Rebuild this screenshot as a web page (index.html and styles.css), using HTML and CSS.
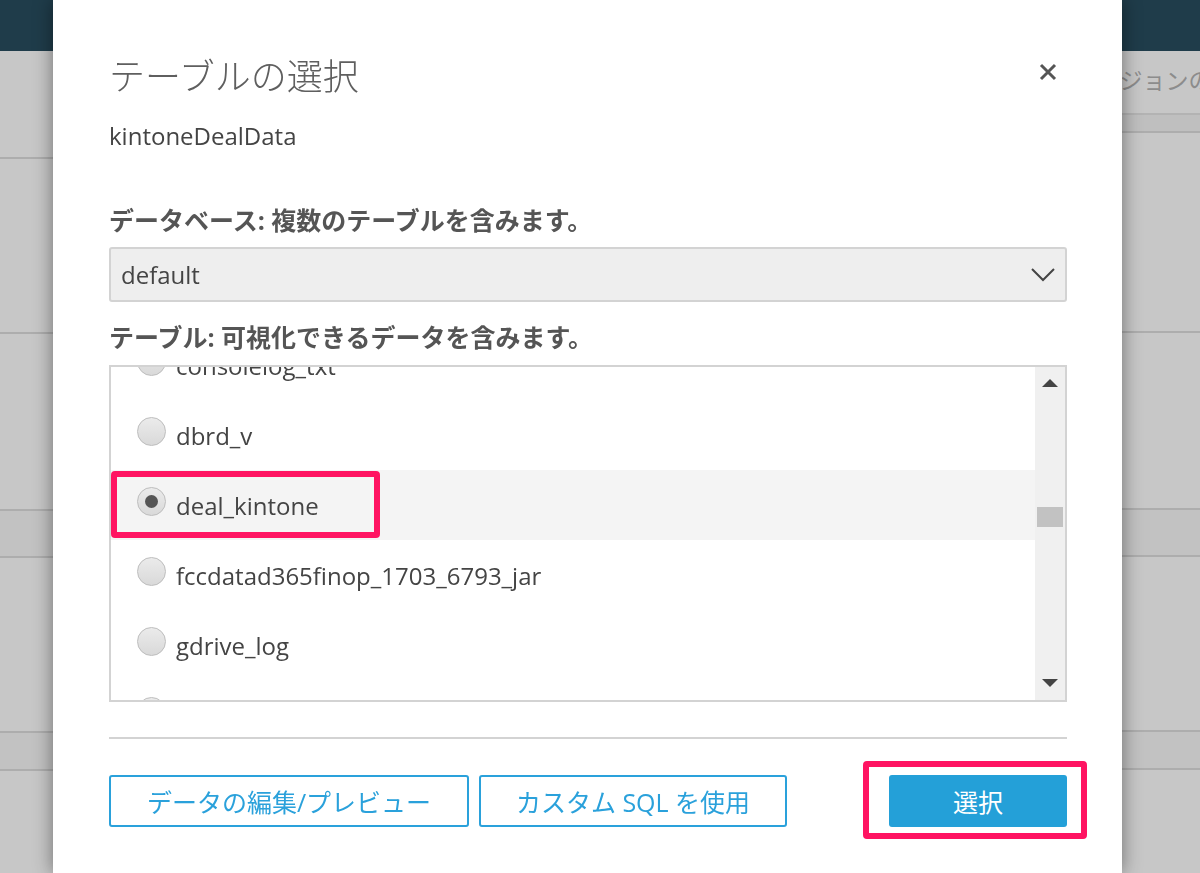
FILE: index.html
```html
<!DOCTYPE html>
<html lang="ja">
<head>
    <meta charset="utf-8">
    <link rel="stylesheet" href="styles.css">
</head>
<body>
<div id="pagediv">
    <div id="topbar"></div>
    <div id="pagebody">
        <div class="side side-left">
            <div class="bgrow bgrow-a"></div>
            <div class="bgrow bgrow-b"></div>
            <div class="bgrow bgrow-c"></div>
            <div class="bgrow bgrow-band"></div>
            <div class="bgrow bgrow-d"></div>
            <div class="bgrow bgrow-band2"></div>
        </div>
        <div class="side side-right">
            <div class="bgrow bgrow-title"><span class="bgtext">バージョンの</span></div>
            <div class="bgrow bgrow-tab"></div>
            <div class="bgrow bgrow-b2"></div>
            <div class="bgrow bgrow-c"></div>
            <div class="bgrow bgrow-band"></div>
            <div class="bgrow bgrow-d"></div>
            <div class="bgrow bgrow-band2"></div>
        </div>
    </div>
</div>

<div id="modal">
    <div class="modalheader">
        <h2 class="modaltitle">テーブルの選択</h2>
        <button class="closebtn" aria-label="close">
            <svg width="18" height="18" viewBox="0 0 18 18">
                <path d="M2 2 L16 16 M16 2 L2 16" stroke="#555" stroke-width="3" fill="none"/>
            </svg>
        </button>
    </div>
    <div class="sourcename">kintoneDealData</div>

    <label class="fieldlabel" for="dbselect">データベース: 複数のテーブルを含みます。</label>
    <div class="selectbox" id="dbselect">
        <span>default</span>
        <svg width="24" height="14" viewBox="0 0 24 14">
            <path d="M1 1 L12 12 L23 1" stroke="#444" stroke-width="2" fill="none"/>
        </svg>
    </div>

    <div class="fieldlabel">テーブル: 可視化できるデータを含みます。</div>
    <div class="tablelist">
        <div class="listview">
            <div class="listinner">
                <div class="listrow"><span class="radio"></span>consolelog_txt</div>
                <div class="listrow"><span class="radio"></span>dbrd_v</div>
                <div class="listrow selected"><span class="radio checked"></span>deal_kintone<span class="markbox"></span></div>
                <div class="listrow"><span class="radio"></span>fccdatad365finop_1703_6793_jar</div>
                <div class="listrow"><span class="radio"></span>gdrive_log</div>
                <div class="listrow"><span class="radio"></span>kintone_log</div>
            </div>
        </div>
        <div class="scrollbar">
            <span class="arrow arrow-up"></span>
            <div class="track"><span class="thumb"></span></div>
            <span class="arrow arrow-down"></span>
        </div>
    </div>

    <hr class="divider">

    <div class="buttonrow">
        <button class="btn btn-outline btn-edit">データの編集/プレビュー</button>
        <button class="btn btn-outline btn-sql">カスタム SQL を使用</button>
        <div class="marked">
            <button class="btn btn-primary">選択</button>
        </div>
    </div>
</div>
</body>
</html>
```

FILE: styles.css
```css
html, body {
    margin: 0;
    height: 100%;
    overflow: hidden;
}

body {
    font-family: "Open Sans", "Noto Sans CJK JP", sans-serif;
    background-color: #c7c7c7;
}

#pagediv {
    height: 873px;
}

#topbar {
    height: 51px;
    background-color: #1f3c4a;
}

#pagebody {
    display: flex;
    justify-content: space-between;
}

.side {
    display: flex;
    flex-direction: column;
}

.side-left {
    width: 53px;
}

.side-right {
    width: 78px;
    overflow: hidden;
}

.bgrow {
    border-bottom: 2px solid #adadad;
    box-sizing: border-box;
}

.bgrow-a { height: 108px; }
.bgrow-b { height: 175px; }
.bgrow-c { height: 177px; }
.bgrow-band { height: 47px; background-color: #c2c2c2; }
.bgrow-d { height: 175px; }
.bgrow-band2 { height: 38px; background-color: #c2c2c2; }

.bgrow-title {
    height: 62px;
    border-bottom: none;
    padding-top: 11px;
    white-space: nowrap;
}

.bgtext {
    display: inline-block;
    margin-left: -48px;
    font-size: 23px;
    color: #8c8c8c;
}

.bgrow-tab {
    height: 20px;
    border-top: 2px solid #b3b3b3;
    background-color: #bfbfbf;
}

.bgrow-b2 { height: 200px; }

/* modal */
#modal {
    position: fixed;
    top: 0;
    left: 53px;
    width: 1069px;
    height: 873px;
    box-sizing: border-box;
    padding: 55px 55px 0 56px;
    background-color: #fff;
    box-shadow: 0 0 18px rgba(0, 0, 0, 0.45);
    color: #444;
}

.modalheader {
    display: flex;
    justify-content: space-between;
    align-items: flex-start;
}

.modaltitle {
    margin: 0;
    font-size: 36px;
    line-height: 44px;
    font-weight: 300;
    color: #5f5f5f;
}

.closebtn {
    margin: 8px 10px 0 0;
    padding: 0;
    border: none;
    background: none;
    width: 18px;
    height: 18px;
}

.sourcename {
    margin-top: 21px;
    font-size: 24px;
    line-height: 32px;
    color: #444;
}

.fieldlabel {
    display: block;
    font-size: 25px;
    line-height: 32px;
    font-weight: bold;
    color: #555;
}

.sourcename + .fieldlabel {
    margin-top: 52px;
    margin-bottom: 11px;
}

.selectbox {
    display: flex;
    justify-content: space-between;
    align-items: center;
    height: 55px;
    box-sizing: border-box;
    padding: 0 10px 0 10px;
    border: 2px solid #d3d3d3;
    border-radius: 3px;
    background-color: #eee;
    font-size: 24px;
    color: #444;
}

.selectbox + .fieldlabel {
    margin-top: 19px;
    margin-bottom: 12px;
}

.tablelist {
    display: flex;
    height: 337px;
    box-sizing: border-box;
    border: 2px solid #d3d3d3;
}

.listview {
    flex: 1;
    overflow: hidden;
}

.listinner {
    margin-top: -37px;
}

.listrow {
    position: relative;
    display: flex;
    align-items: center;
    height: 70px;
    padding-left: 26px;
    font-size: 24px;
    color: #444;
}

.listrow.selected {
    background-color: #f4f4f4;
}

.radio {
    width: 29px;
    height: 29px;
    box-sizing: border-box;
    margin: 0 10px 8px 0;
    border: 1px solid #bdbdbd;
    border-radius: 50%;
    background: linear-gradient(#ebebeb, #d9d9d9);
    display: flex;
    align-items: center;
    justify-content: center;
}

.radio.checked::after {
    content: "";
    width: 13px;
    height: 13px;
    border-radius: 50%;
    background-color: #555;
}

/* red annotation frame */
.markbox {
    position: absolute;
    top: 1px;
    left: 0;
    width: 269px;
    height: 67px;
    box-sizing: border-box;
    border: 6px solid #ff1462;
    border-radius: 4px;
}

.scrollbar {
    width: 30px;
    display: flex;
    flex-direction: column;
    align-items: center;
    background-color: #f0f0f0;
}

.arrow {
    width: 0;
    height: 0;
    border-left: 8px solid transparent;
    border-right: 8px solid transparent;
}

.arrow-up {
    margin-top: 12px;
    border-bottom: 8px solid #444;
}

.arrow-down {
    margin-bottom: 13px;
    border-top: 8px solid #444;
}

.track {
    flex: 1;
    width: 100%;
    padding-top: 120px;
    box-sizing: border-box;
    display: flex;
    justify-content: center;
}

.thumb {
    width: 26px;
    height: 20px;
    background-color: #c2c2c2;
}

.divider {
    margin: 35px 0 0 0;
    border: none;
    border-top: 2px solid #d3d3d3;
}

.buttonrow {
    display: flex;
    align-items: center;
    margin-top: 36px;
}

.btn {
    height: 52px;
    box-sizing: border-box;
    border-radius: 3px;
    font-family: "Open Sans", "Noto Sans CJK JP", sans-serif;
    font-size: 25px;
    padding: 0;
}

.btn-outline {
    border: 2px solid #2aa1db;
    background-color: #fff;
    color: #2aa1db;
}

.btn-edit {
    width: 360px;
}

.btn-sql {
    width: 308px;
    margin-left: 10px;
}

.marked {
    position: relative;
    margin-left: auto;
}

.marked::after {
    content: "";
    position: absolute;
    top: -14px;
    left: -26px;
    right: -20px;
    bottom: -12px;
    border: 6px solid #ff1462;
    border-radius: 4px;
}

.btn-primary {
    width: 178px;
    border: none;
    background-color: #24a0d8;
    color: #fff;
}
```
